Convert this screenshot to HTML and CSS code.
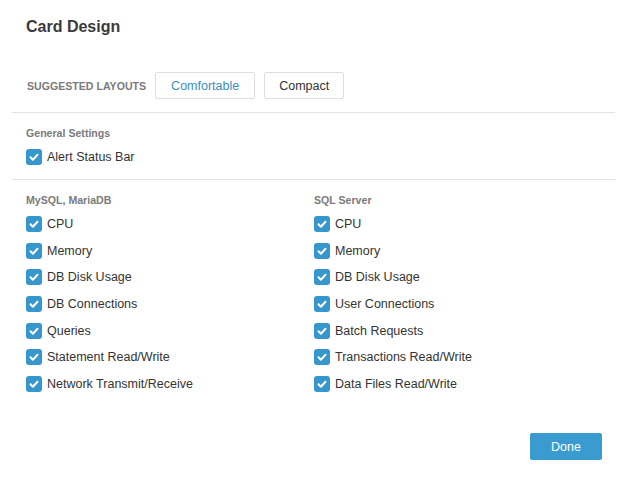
FILE: index.html
```html
<!DOCTYPE html>
<html lang="en">
<head>
  <meta charset="UTF-8">
  <meta name="viewport" content="width=device-width, initial-scale=1.0">
  <title>Card Design</title>
  <link rel="stylesheet" href="styles.css">
</head>
<body>
  <div class="dialog">
    <h1>Card Design</h1>

    <div class="layouts">
      <span class="layouts-label">Suggested Layouts</span>
      <button class="layout-btn active">Comfortable</button>
      <button class="layout-btn">Compact</button>
    </div>

    <div class="section">
      <h2>General Settings</h2>
      <label class="option"><span class="check"><svg viewBox="0 0 16 16"><path d="M4.5 8.3l2.4 2.4 4.6-4.9"/></svg></span>Alert Status Bar</label>
    </div>

    <div class="section columns">
      <div class="column">
        <h2>MySQL, MariaDB</h2>
        <label class="option"><span class="check"><svg viewBox="0 0 16 16"><path d="M4.5 8.3l2.4 2.4 4.6-4.9"/></svg></span>CPU</label>
        <label class="option"><span class="check"><svg viewBox="0 0 16 16"><path d="M4.5 8.3l2.4 2.4 4.6-4.9"/></svg></span>Memory</label>
        <label class="option"><span class="check"><svg viewBox="0 0 16 16"><path d="M4.5 8.3l2.4 2.4 4.6-4.9"/></svg></span>DB Disk Usage</label>
        <label class="option"><span class="check"><svg viewBox="0 0 16 16"><path d="M4.5 8.3l2.4 2.4 4.6-4.9"/></svg></span>DB Connections</label>
        <label class="option"><span class="check"><svg viewBox="0 0 16 16"><path d="M4.5 8.3l2.4 2.4 4.6-4.9"/></svg></span>Queries</label>
        <label class="option"><span class="check"><svg viewBox="0 0 16 16"><path d="M4.5 8.3l2.4 2.4 4.6-4.9"/></svg></span>Statement Read/Write</label>
        <label class="option"><span class="check"><svg viewBox="0 0 16 16"><path d="M4.5 8.3l2.4 2.4 4.6-4.9"/></svg></span>Network Transmit/Receive</label>
      </div>
      <div class="column">
        <h2>SQL Server</h2>
        <label class="option"><span class="check"><svg viewBox="0 0 16 16"><path d="M4.5 8.3l2.4 2.4 4.6-4.9"/></svg></span>CPU</label>
        <label class="option"><span class="check"><svg viewBox="0 0 16 16"><path d="M4.5 8.3l2.4 2.4 4.6-4.9"/></svg></span>Memory</label>
        <label class="option"><span class="check"><svg viewBox="0 0 16 16"><path d="M4.5 8.3l2.4 2.4 4.6-4.9"/></svg></span>DB Disk Usage</label>
        <label class="option"><span class="check"><svg viewBox="0 0 16 16"><path d="M4.5 8.3l2.4 2.4 4.6-4.9"/></svg></span>User Connections</label>
        <label class="option"><span class="check"><svg viewBox="0 0 16 16"><path d="M4.5 8.3l2.4 2.4 4.6-4.9"/></svg></span>Batch Requests</label>
        <label class="option"><span class="check"><svg viewBox="0 0 16 16"><path d="M4.5 8.3l2.4 2.4 4.6-4.9"/></svg></span>Transactions Read/Write</label>
        <label class="option"><span class="check"><svg viewBox="0 0 16 16"><path d="M4.5 8.3l2.4 2.4 4.6-4.9"/></svg></span>Data Files Read/Write</label>
      </div>
    </div>

    <div class="footer">
      <button class="done-btn">Done</button>
    </div>
  </div>
</body>
</html>
```

FILE: styles.css
```css
/* General Styles */
body {
  margin: 0;
  font-family: "Liberation Sans", Arial, sans-serif;
  background-color: #ffffff;
  color: #333;
}

.dialog {
  padding: 17px 13px 0 12px;
}

h1 {
  margin: 0 14px;
  font-size: 16px;
  line-height: 20px;
  font-weight: bold;
  color: #3a3a3a;
}

/* Layout buttons */
.layouts {
  display: flex;
  align-items: center;
  gap: 9px;
  margin-top: 35px;
  padding: 0 14px 13px 15px;
  border-bottom: 1px solid #e3e3e3;
}

.layouts-label {
  font-size: 10.6px;
  font-weight: bold;
  text-transform: uppercase;
  color: #7a7a7a;
}

.layout-btn {
  height: 27px;
  padding: 0 14px;
  border: 1px solid #dedede;
  border-radius: 2px;
  background-color: #fff;
  font-family: inherit;
  font-size: 12.5px;
  color: #333;
  cursor: pointer;
}

.layout-btn.active {
  padding: 0 15px;
  color: #3a8fbb;
}

/* Sections */
.section {
  padding: 13px 14px 8px;
  border-bottom: 1px solid #e3e3e3;
}

.section.columns {
  display: grid;
  grid-template-columns: 288px 1fr;
  border-bottom: none;
  padding-bottom: 0;
}

h2 {
  margin: 0 0 4px;
  font-size: 10.6px;
  line-height: 14px;
  font-weight: bold;
  color: #7a7a7a;
}

.option {
  display: flex;
  align-items: center;
  gap: 5px;
  height: 26.67px;
  font-size: 12.5px;
  color: #333;
}

.check {
  display: inline-flex;
  width: 16px;
  height: 16px;
  border-radius: 3px;
  background-color: #3597cc;
}

.check svg {
  width: 16px;
  height: 16px;
  fill: none;
  stroke: #fff;
  stroke-width: 2;
  stroke-linecap: round;
  stroke-linejoin: round;
}

/* Footer */
.footer {
  display: flex;
  justify-content: flex-end;
  padding: 36px 13px 0;
}

.done-btn {
  width: 72px;
  height: 27px;
  border: none;
  border-radius: 2px;
  background-color: #3a9bd0;
  color: #fff;
  font-family: inherit;
  font-size: 12.5px;
  cursor: pointer;
}

.done-btn:hover {
  background-color: #2f86b6;
}
```
